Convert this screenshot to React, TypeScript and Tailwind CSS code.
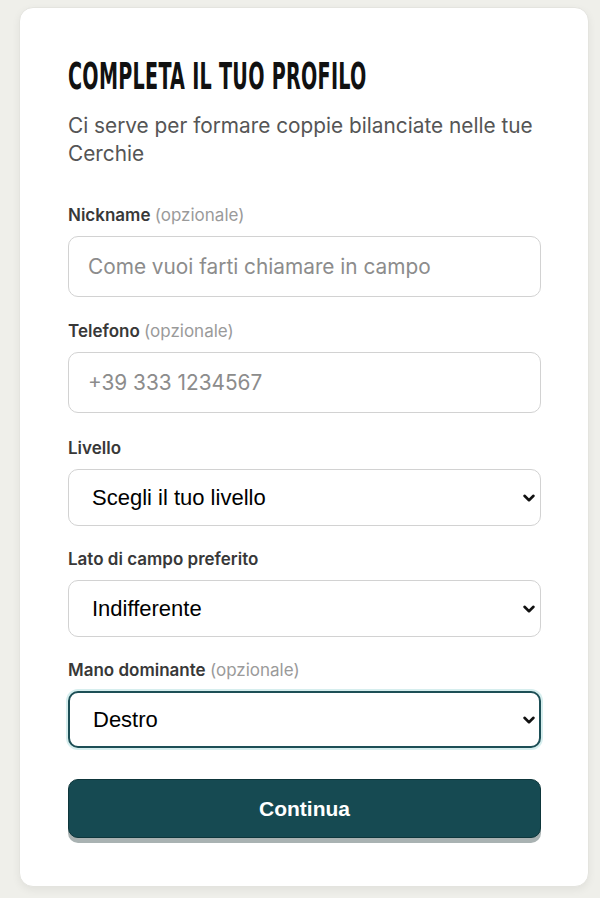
import React from 'react';

const labelCls = "block text-[17px] leading-[22px] font-semibold text-[#383838] mb-[10px]";
const opt = "font-normal text-[#9a9a9a]";

function Chevron() {
  return (
    <svg className="pointer-events-none absolute right-[5px] top-1/2 -translate-y-1/2" width="14" height="10" viewBox="0 0 14 10" fill="none">
      <path d="M2.5 2.8 L7 7.2 L11.5 2.8" stroke="#111" strokeWidth="2.6" strokeLinecap="round" strokeLinejoin="round" />
    </svg>
  );
}

function SelectField({ label, optional, value, options, focused }: { label: string; optional?: boolean; value: string; options: string[]; focused?: boolean }) {
  return (
    <div>
      <label className={labelCls}>
        {label} {optional && <span className={opt}>(opzionale)</span>}
      </label>
      <div className="relative">
        <select
          defaultValue={value}
          className={
            "w-full h-[57px] appearance-none rounded-[10px] bg-white pl-[23px] pr-10 text-[22px] text-black outline-none " +
            (focused
              ? "border-2 border-[#1d4f56] shadow-[0_0_0_2px_#d6eeee]"
              : "border-[1.5px] border-[#d2d2d2]")
          }
          style={{ fontFamily: '"Liberation Sans", Arial, sans-serif' }}
        >
          {options.map((o) => (
            <option key={o}>{o}</option>
          ))}
        </select>
        <Chevron />
      </div>
    </div>
  );
}

export default function App() {
  return (
    <div className="min-h-[898px] bg-[#efefea] pl-[19px] pr-[11px] pt-[7px] pb-[12px]" style={{ fontFamily: 'Inter, "Noto Sans", sans-serif' }}>
      <div className="rounded-[14px] bg-white border border-[#e4e4df] shadow-[0_3px_8px_rgba(0,0,0,0.06)] pl-[48px] pr-[47px] pt-[49px] pb-[48px]">
        <h1
          className="inline-block origin-left scale-x-[0.575] whitespace-nowrap text-[37px] leading-[40px] font-bold text-[#111] tracking-[0.5px]"
          style={{ fontFamily: '"DejaVu Sans Condensed", "DejaVu Sans", sans-serif' }}
        >
          COMPLETA IL TUO PROFILO
        </h1>
        <p className="mt-[15px] text-[20.8px] leading-[28px] text-[#555]">
          Ci serve per formare coppie bilanciate nelle tue Cerchie
        </p>

        <div className="mt-[36px] flex flex-col">
          <div>
            <label className={labelCls}>
              Nickname <span className={opt}>(opzionale)</span>
            </label>
            <input
              placeholder="Come vuoi farti chiamare in campo"
              className="w-full h-[61px] rounded-[10px] border-[1.5px] border-[#d2d2d2] px-[19px] text-[20.8px] placeholder:text-[#8c8c8c] outline-none"
            />
          </div>
          <div className="mt-[23px]">
            <label className={labelCls}>
              Telefono <span className={opt}>(opzionale)</span>
            </label>
            <input
              placeholder="+39 333 1234567"
              className="w-full h-[61px] rounded-[10px] border-[1.5px] border-[#d2d2d2] px-[19px] text-[20.8px] placeholder:text-[#8c8c8c] outline-none"
            />
          </div>
          <div className="mt-[24px]">
            <SelectField label="Livello" value="Scegli il tuo livello" options={["Scegli il tuo livello", "Principiante", "Intermedio", "Avanzato"]} />
          </div>
          <div className="mt-[22px]">
            <SelectField label="Lato di campo preferito" value="Indifferente" options={["Indifferente", "Destro", "Sinistro"]} />
          </div>
          <div className="mt-[22px]">
            <SelectField label="Mano dominante" optional value="Destro" options={["Destro", "Mancino"]} focused />
          </div>

          <button
            className="mt-[31px] h-[59px] w-full rounded-[10px] border border-[#0e363b] bg-[#164a52] text-[21px] font-bold text-white shadow-[0_5px_0_#a9b2b2]"
            style={{ fontFamily: '"Liberation Sans", Arial, sans-serif' }}
          >
            Continua
          </button>
        </div>
      </div>
    </div>
  );
}
